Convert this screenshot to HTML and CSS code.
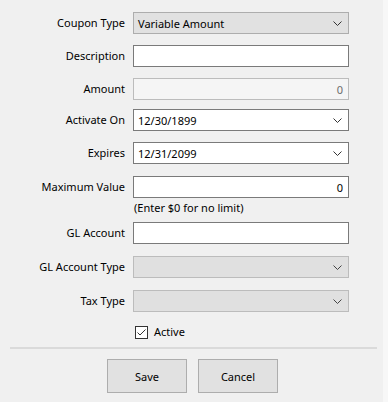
FILE: index.html
```html
<!DOCTYPE html>
<html lang="en">
<head>
    <meta charset="UTF-8">
    <meta name="viewport" content="width=device-width, initial-scale=1.0">
    <title>Coupon</title>
    <link rel="stylesheet" href="styles.css">
</head>
<body>
    <div class="ventana">
        <div class="formulario">
            <div class="fila">
                <label class="etiqueta">Coupon Type</label>
                <div class="campo lista">
                    <span>Variable Amount</span>
                    <svg class="flecha" width="9" height="5" viewBox="0 0 9 5"><path d="M0.5 0.5 L4.5 4.5 L8.5 0.5" fill="none" stroke="#333" stroke-width="1"/></svg>
                </div>
            </div>
            <div class="fila">
                <label class="etiqueta">Description</label>
                <div class="campo"></div>
            </div>
            <div class="fila">
                <label class="etiqueta">Amount</label>
                <div class="campo deshabilitado derecha"><span>0</span></div>
            </div>
            <div class="fila fecha">
                <label class="etiqueta">Activate On</label>
                <div class="campo">
                    <span>12/30/1899</span>
                    <svg class="flecha" width="9" height="5" viewBox="0 0 9 5"><path d="M0.5 0.5 L4.5 4.5 L8.5 0.5" fill="none" stroke="#333" stroke-width="1"/></svg>
                </div>
            </div>
            <div class="fila">
                <label class="etiqueta">Expires</label>
                <div class="campo">
                    <span>12/31/2099</span>
                    <svg class="flecha" width="9" height="5" viewBox="0 0 9 5"><path d="M0.5 0.5 L4.5 4.5 L8.5 0.5" fill="none" stroke="#333" stroke-width="1"/></svg>
                </div>
            </div>
            <div class="fila arriba separada">
                <label class="etiqueta">Maximum Value</label>
                <div>
                    <div class="campo derecha"><span>0</span></div>
                    <div class="ayuda">(Enter $0 for no limit)</div>
                </div>
            </div>
            <div class="fila">
                <label class="etiqueta">GL Account</label>
                <div class="campo"></div>
            </div>
            <div class="fila separada">
                <label class="etiqueta">GL Account Type</label>
                <div class="campo lista-deshabilitada">
                    <span></span>
                    <svg class="flecha" width="9" height="5" viewBox="0 0 9 5"><path d="M0.5 0.5 L4.5 4.5 L8.5 0.5" fill="none" stroke="#444" stroke-width="1"/></svg>
                </div>
            </div>
            <div class="fila separada">
                <label class="etiqueta">Tax Type</label>
                <div class="campo lista-deshabilitada">
                    <span></span>
                    <svg class="flecha" width="9" height="5" viewBox="0 0 9 5"><path d="M0.5 0.5 L4.5 4.5 L8.5 0.5" fill="none" stroke="#444" stroke-width="1"/></svg>
                </div>
            </div>
            <div class="fila">
                <span></span>
                <div class="casilla-fila">
                    <span class="casilla">
                        <svg width="11" height="11" viewBox="0 0 11 11"><path d="M1.5 5.5 L4 8 L9.5 2.5" fill="none" stroke="#333" stroke-width="1"/></svg>
                    </span>
                    <span>Active</span>
                </div>
            </div>
        </div>

        <div class="separador"></div>

        <div class="botones">
            <button class="boton">Save</button>
            <button class="boton">Cancel</button>
        </div>
    </div>
</body>
</html>
```

FILE: styles.css
```css
body {
    margin: 0;
    background-color: #f7f7f7;
    font-family: "Segoe UI", "Noto Sans", sans-serif;
    font-size: 11px;
    color: #000;
}

.ventana {
    width: 383px;
    height: 402px;
    background-color: #f0f0f0;
    overflow: hidden;
}

.formulario {
    display: flex;
    flex-direction: column;
    gap: 11px;
    padding-top: 12px;
}

.fila {
    display: grid;
    grid-template-columns: 125px 216px;
    column-gap: 8px;
    align-items: center;
}

/* los selectores de fecha quedan un poco más arriba */
.fila.fecha {
    margin-top: -2px;
}

.fila.separada {
    margin-top: 1px;
}

.fila.arriba {
    align-items: start;
}

.etiqueta {
    text-align: right;
    line-height: 22px;
    white-space: nowrap;
}

.campo {
    box-sizing: border-box;
    height: 22px;
    border: 1px solid #7a7a7a;
    background-color: white;
    padding: 0 5px 0 4px;
    display: flex;
    align-items: center;
    justify-content: space-between;
}

.campo.derecha {
    justify-content: flex-end;
}

.lista {
    background-color: #e1e1e1;
    border-color: #adadad;
}

.lista-deshabilitada {
    background-color: #e0e0e0;
    border-color: #bcbcbc;
}

.deshabilitado {
    background-color: #f5f5f5;
    border-color: #bcbcbc;
    color: #6d6d6d;
}

.flecha {
    margin-right: 1px;
}

.ayuda {
    margin-top: 3px;
    margin-bottom: -4px;
    line-height: 14px;
    padding-left: 1px;
}

.casilla-fila {
    display: flex;
    align-items: center;
    gap: 6px;
    line-height: 18px;
    padding-left: 2px;
}

.casilla {
    box-sizing: border-box;
    width: 13px;
    height: 13px;
    border: 1px solid #333;
    background-color: white;
    display: flex;
}

.separador {
    margin: 6px 0 0 10px;
    width: 367px;
    height: 2px;
    background-color: #dadada;
}

.botones {
    display: flex;
    gap: 11px;
    padding-left: 107px;
    margin-top: 10px;
}

.boton {
    width: 80px;
    height: 34px;
    background-color: #e1e1e1;
    border: 1px solid #adadad;
    font-family: inherit;
    font-size: 11px;
    color: #000;
    padding: 0;
}
```
